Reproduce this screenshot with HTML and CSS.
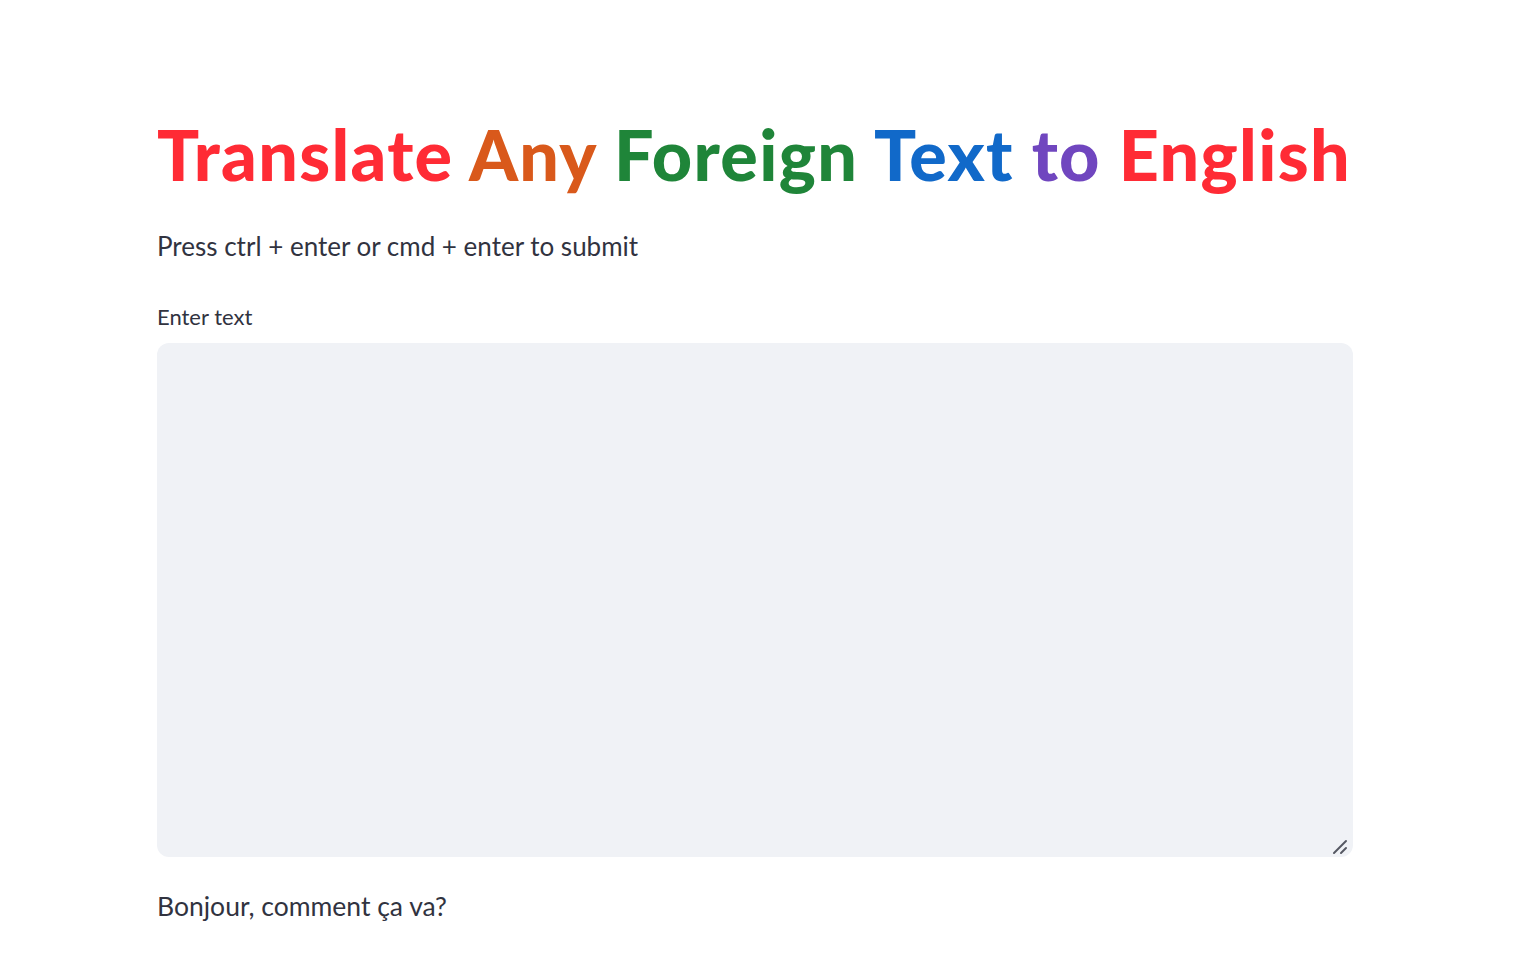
FILE: index.html
```html
<!DOCTYPE html>
<html lang="en">
<head>
<meta charset="utf-8">
<title>Translate Any Foreign Text to English</title>
<link rel="stylesheet" href="styles.css">
</head>
<body>
<main class="container">
  <h1 class="title"><span class="red">Translate</span> <span class="orange">Any</span> <span class="green">Foreign</span> <span class="blue">Text</span> <span class="violet">to</span> <span class="red">English</span></h1>
  <p class="hint">Press ctrl + enter or cmd + enter to submit</p>
  <label class="label" for="src">Enter text</label>
  <div class="field">
    <textarea id="src" class="input"></textarea>
    <svg class="grip" width="16" height="16" viewBox="0 0 16 16" aria-hidden="true">
      <line x1="2" y1="14" x2="14" y2="2" stroke="#555862" stroke-width="2" stroke-linecap="round"/>
      <line x1="9" y1="14" x2="14" y2="9" stroke="#555862" stroke-width="2" stroke-linecap="round"/>
    </svg>
  </div>
  <p class="result">Bonjour, comment ça va?</p>
</main>
</body>
</html>
```
FILE: styles.css
```css
html, body {
  margin: 0;
  padding: 0;
  background: #ffffff;
}
body {
  font-family: "Lato", "Noto Sans", sans-serif;
  color: #31333f;
}
.container {
  display: flex;
  flex-direction: column;
  padding: 112px 185px 0 157px;
}
.title {
  margin: 0;
  font-size: 70px;
  font-weight: 900;
  line-height: 84px;
  letter-spacing: 1.3px;
  white-space: nowrap;
}
.red { color: #ff2b35; }
.orange { color: #d9591b; }
.green { color: #1f8539; }
.blue { color: #1169c9; }
.violet { color: #7046bf; }
.hint {
  margin: 30px 0 0;
  font-size: 26px;
  line-height: 40px;
}
.label {
  margin-top: 36px;
  font-size: 22px;
  line-height: 30px;
}
.field {
  position: relative;
  margin-top: 11px;
  height: 514px;
}
.input {
  display: block;
  width: 100%;
  height: 100%;
  box-sizing: border-box;
  border: none;
  border-radius: 12px;
  background: #f0f2f6;
  resize: none;
  outline: none;
  font-family: inherit;
  font-size: 26px;
}
.grip {
  position: absolute;
  right: 5px;
  bottom: 2px;
}
.result {
  margin: 29px 0 0;
  font-size: 26.5px;
  line-height: 40px;
}
```
